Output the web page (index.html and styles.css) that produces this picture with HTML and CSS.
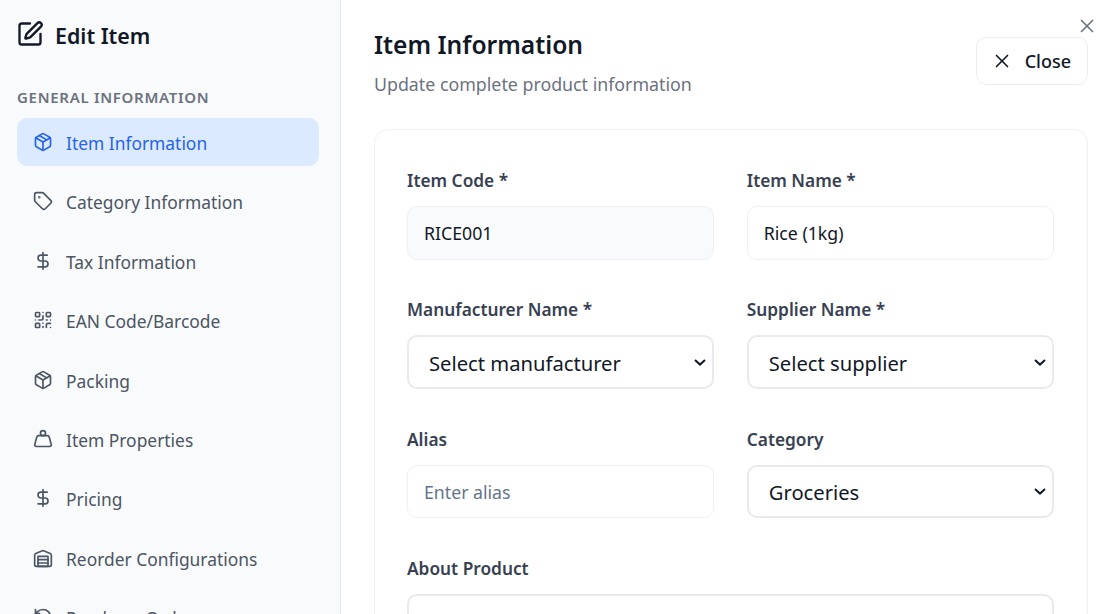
FILE: index.html
```html
<!DOCTYPE html>
<html lang="en">
<head>
    <meta charset="UTF-8">
    <title>Edit Item</title>
    <link rel="stylesheet" href="styles.css">
</head>
<body>
    <div class="layout">
        <aside class="sidebar">
            <h2 class="sidebar-title">
                <svg class="icon icon-title" viewBox="0 0 24 24"><path d="M12 3H5a2 2 0 0 0-2 2v14a2 2 0 0 0 2 2h14a2 2 0 0 0 2-2v-7"/><path d="M18.375 2.625a1 1 0 0 1 3 3l-9.013 9.014a2 2 0 0 1-.853.505l-2.873.84a.5.5 0 0 1-.62-.62l.84-2.873a2 2 0 0 1 .506-.852z"/></svg>
                Edit Item
            </h2>
            <div class="section-label">GENERAL INFORMATION</div>
            <nav>
                <a class="nav-item active">
                    <svg class="icon" viewBox="0 0 24 24"><path d="M11 21.73a2 2 0 0 0 2 0l7-4A2 2 0 0 0 21 16V8a2 2 0 0 0-1-1.73l-7-4a2 2 0 0 0-2 0l-7 4A2 2 0 0 0 3 8v8a2 2 0 0 0 1 1.73z"/><path d="M12 22V12"/><path d="M3.29 7 12 12l8.71-5"/><path d="m7.5 4.27 9 5.15"/></svg>
                    <span class="nav-label">Item Information</span>
                </a>
                <a class="nav-item">
                    <svg class="icon" viewBox="0 0 24 24"><path d="M12.586 2.586A2 2 0 0 0 11.172 2H4a2 2 0 0 0-2 2v7.172a2 2 0 0 0 .586 1.414l8.704 8.704a2.426 2.426 0 0 0 3.42 0l6.58-6.58a2.426 2.426 0 0 0 0-3.42z"/><circle cx="7.5" cy="7.5" r=".5"/></svg>
                    <span class="nav-label">Category Information</span>
                </a>
                <a class="nav-item">
                    <svg class="icon" viewBox="0 0 24 24"><path d="M12 2v20"/><path d="M17 5H9.5a3.5 3.5 0 0 0 0 7h5a3.5 3.5 0 0 1 0 7H6"/></svg>
                    <span class="nav-label">Tax Information</span>
                </a>
                <a class="nav-item">
                    <svg class="icon" viewBox="0 0 24 24"><rect width="5" height="5" x="3" y="3" rx="1"/><rect width="5" height="5" x="16" y="3" rx="1"/><rect width="5" height="5" x="3" y="16" rx="1"/><path d="M21 16h-3a2 2 0 0 0-2 2v3"/><path d="M21 21v.01"/><path d="M12 7v3a2 2 0 0 1-2 2H7"/><path d="M3 12h.01"/><path d="M12 3h.01"/><path d="M12 16v.01"/><path d="M16 12h1"/><path d="M21 12v.01"/><path d="M12 21v-1"/></svg>
                    <span class="nav-label">EAN Code/Barcode</span>
                </a>
                <a class="nav-item">
                    <svg class="icon" viewBox="0 0 24 24"><path d="M11 21.73a2 2 0 0 0 2 0l7-4A2 2 0 0 0 21 16V8a2 2 0 0 0-1-1.73l-7-4a2 2 0 0 0-2 0l-7 4A2 2 0 0 0 3 8v8a2 2 0 0 0 1 1.73z"/><path d="M12 22V12"/><path d="M3.29 7 12 12l8.71-5"/><path d="m7.5 4.27 9 5.15"/></svg>
                    <span class="nav-label">Packing</span>
                </a>
                <a class="nav-item">
                    <svg class="icon" viewBox="0 0 24 24"><circle cx="12" cy="5" r="3"/><path d="M6.5 8a2 2 0 0 0-1.905 1.46L2.1 18.5A2 2 0 0 0 4 21h16a2 2 0 0 0 1.925-2.54L19.4 9.5A2 2 0 0 0 17.48 8Z"/></svg>
                    <span class="nav-label">Item Properties</span>
                </a>
                <a class="nav-item">
                    <svg class="icon" viewBox="0 0 24 24"><path d="M12 2v20"/><path d="M17 5H9.5a3.5 3.5 0 0 0 0 7h5a3.5 3.5 0 0 1 0 7H6"/></svg>
                    <span class="nav-label">Pricing</span>
                </a>
                <a class="nav-item">
                    <svg class="icon" viewBox="0 0 24 24"><path d="M22 8.35V20a2 2 0 0 1-2 2H4a2 2 0 0 1-2-2V8.35A2 2 0 0 1 3.26 6.5l8-3.2a2 2 0 0 1 1.48 0l8 3.2A2 2 0 0 1 22 8.35Z"/><path d="M6 18h12"/><path d="M6 14h12"/><rect width="12" height="12" x="6" y="10"/></svg>
                    <span class="nav-label">Reorder Configurations</span>
                </a>
                <a class="nav-item">
                    <svg class="icon" viewBox="0 0 24 24"><path d="M3 12a9 9 0 1 0 9-9 9.75 9.75 0 0 0-6.74 2.74L3 8"/><path d="M3 3v5h5"/></svg>
                    <span class="nav-label">Purchase Order</span>
                </a>
            </nav>
        </aside>

        <main class="content">
            <button class="dialog-x" aria-label="Dismiss">
                <svg class="icon" viewBox="0 0 24 24"><path d="M18 6 6 18"/><path d="m6 6 12 12"/></svg>
            </button>
            <header class="content-head">
                <div>
                    <h1>Item Information</h1>
                    <p>Update complete product information</p>
                </div>
                <button class="close-btn">
                    <svg class="icon" viewBox="0 0 24 24"><path d="M18 6 6 18"/><path d="m6 6 12 12"/></svg>
                    Close
                </button>
            </header>

            <section class="card">
                <div class="form-grid">
                    <div class="field">
                        <label>Item Code *</label>
                        <input class="readonly" type="text" value="RICE001" readonly>
                    </div>
                    <div class="field">
                        <label>Item Name *</label>
                        <input type="text" value="Rice (1kg)">
                    </div>
                    <div class="field">
                        <label>Manufacturer Name *</label>
                        <select><option>Select manufacturer</option></select>
                    </div>
                    <div class="field">
                        <label>Supplier Name *</label>
                        <select><option>Select supplier</option></select>
                    </div>
                    <div class="field">
                        <label>Alias</label>
                        <input type="text" placeholder="Enter alias">
                    </div>
                    <div class="field">
                        <label>Category</label>
                        <select><option>Groceries</option></select>
                    </div>
                    <div class="field field-wide">
                        <label>About Product</label>
                        <textarea rows="4"></textarea>
                    </div>
                </div>
            </section>
        </main>
    </div>
</body>
</html>
```

FILE: styles.css
```css
/* Base styling */
html, body {
    height: 100%;
    margin: 0;
    overflow: hidden;
}

body {
    font-family: "Noto Sans", "Open Sans", sans-serif;
    background: #ffffff;
    color: #111827;
}

.icon {
    width: 20px;
    height: 20px;
    flex: none;
    fill: none;
    stroke: currentColor;
    stroke-width: 2;
    stroke-linecap: round;
    stroke-linejoin: round;
}

.layout {
    display: flex;
    height: 614px;
}

/* Sidebar */
.sidebar {
    width: 341px;
    flex: none;
    box-sizing: border-box;
    padding: 17px 21px 0 17px;
    background: #f9fafc;
    border-right: 1px solid #e5e7eb;
    overflow: hidden;
}

.sidebar-title {
    display: flex;
    align-items: center;
    gap: 11px;
    height: 36px;
    margin: 0 0 34px;
    font-size: 21.4px;
    font-weight: 600;
}

.icon-title {
    width: 28px;
    height: 28px;
    margin: -3px 0 0 -1px;
}

.section-label {
    margin-bottom: 11px;
    font-size: 15px;
    line-height: 20px;
    font-weight: 600;
    letter-spacing: 0.7px;
    color: #6b7280;
}

.nav-item {
    display: flex;
    align-items: center;
    gap: 13px;
    height: 48px;
    margin-bottom: 11.4px;
    padding: 0 16px;
    border-radius: 10px;
    font-size: 17.4px;
    color: #4b5563;
}

.nav-label {
    padding-top: 2px;
}

.nav-item.active {
    background: #dbeafe;
    color: #2563eb;
}

/* Main content */
.content {
    position: relative;
    flex: 1;
    min-width: 0;
    padding: 27px 27px 0 33px;
    overflow: hidden;
}

.dialog-x {
    position: absolute;
    top: 15px;
    right: 17px;
    display: flex;
    padding: 0;
    border: none;
    background: none;
    color: #6b7280;
}

.dialog-x .icon,
.close-btn .icon {
    width: 22px;
    height: 22px;
    stroke-width: 1.8;
}

.content-head {
    display: flex;
    justify-content: space-between;
    align-items: flex-start;
    margin-bottom: 31px;
}

h1 {
    margin: 0 0 7px;
    font-size: 24.6px;
    line-height: 36px;
    font-weight: 600;
}

.content-head p {
    margin: 0;
    font-size: 17.8px;
    line-height: 28px;
    color: #6b7280;
}

.close-btn {
    display: flex;
    align-items: center;
    gap: 12px;
    height: 48px;
    margin-top: 10px;
    padding: 0 16px 0 14px;
    background: #ffffff;
    border: 1px solid #e9edf3;
    border-radius: 10px;
    font-family: inherit;
    font-size: 18px;
    font-weight: 500;
    color: #111827;
}

.card {
    padding: 37px 33px 40px 32px;
    border: 1px solid #eef1f6;
    border-radius: 14px;
}

.form-grid {
    display: grid;
    grid-template-columns: 1fr 1fr;
    column-gap: 32.5px;
    row-gap: 36.8px;
}

.field-wide {
    grid-column: 1 / -1;
}

label {
    display: block;
    margin-bottom: 12px;
    font-size: 17.3px;
    line-height: 27px;
    font-weight: 600;
    color: #374151;
}

input,
select,
textarea {
    display: block;
    width: 100%;
    box-sizing: border-box;
    font-family: inherit;
    color: #111827;
    background: #ffffff;
    border-radius: 10px;
}

input {
    height: 53.5px;
    padding: 1px 16px 0;
    font-size: 17.7px;
    border: 1px solid #edf1f6;
}

input::placeholder {
    color: #64748b;
    opacity: 1;
}

input.readonly {
    background: #f8fafc;
}

select {
    height: 53.5px;
    padding: 2px 36px 0 20px;
    font-size: 20.2px;
    border: 2px solid #e8eaef;
    appearance: none;
    background-image: url("data:image/svg+xml,%3Csvg xmlns='http://www.w3.org/2000/svg' width='12' height='7' viewBox='0 0 12 7'%3E%3Cpath d='M1 1l5 4.6L11 1' fill='none' stroke='%23111827' stroke-width='2'/%3E%3C/svg%3E");
    background-repeat: no-repeat;
    background-position: right 6px center;
}

textarea {
    height: 120px;
    border: 2px solid #e8eaef;
}
```
